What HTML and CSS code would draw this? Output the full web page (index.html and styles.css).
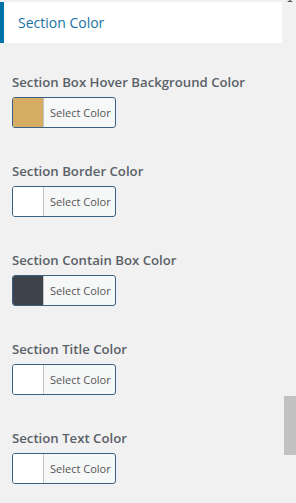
FILE: index.html
```html
<!DOCTYPE html>
<html>
<head>
<meta charset="utf-8">
<link rel="stylesheet" href="styles.css">
</head>
<body>
<div class="page">
  <div class="panel">
    <div class="section-head">Section Color</div>
    <div class="controls">
      <div class="control">
        <div class="label">Section Box Hover Background Color</div>
        <button class="color-btn"><span class="swatch swatch-gold"></span><span class="btn-text">Select Color</span></button>
      </div>
      <div class="control">
        <div class="label">Section Border Color</div>
        <button class="color-btn"><span class="swatch"></span><span class="btn-text">Select Color</span></button>
      </div>
      <div class="control">
        <div class="label">Section Contain Box Color</div>
        <button class="color-btn"><span class="swatch swatch-dark"></span><span class="btn-text">Select Color</span></button>
      </div>
      <div class="control">
        <div class="label">Section Title Color</div>
        <button class="color-btn"><span class="swatch"></span><span class="btn-text">Select Color</span></button>
      </div>
      <div class="control">
        <div class="label">Section Text Color</div>
        <button class="color-btn"><span class="swatch"></span><span class="btn-text">Select Color</span></button>
      </div>
    </div>
  </div>
  <div class="scroll-arrow"></div>
  <div class="scroll-thumb"></div>
</div>
</body>
</html>
```

FILE: styles.css
```css
html, body {
  margin: 0;
  padding: 0;
  background: #f1f1f1;
  height: 100%;
  overflow: hidden;
}
.page {
  position: relative;
  width: 296px;
  height: 503px;
  font-family: "Open Sans", "Noto Sans", sans-serif;
}
.panel {
  width: 282px;
  padding-top: 2px;
}
.section-head {
  height: 41px;
  box-sizing: border-box;
  background: #fff;
  border-left: 4px solid #0073aa;
  padding-left: 14px;
  display: flex;
  align-items: center;
  font-size: 14px;
  font-weight: 500;
  color: #1a71a0;
}
.controls {
  padding: 30px 0 0 12px;
}
.control {
  margin-bottom: 34px;
}
.label {
  font-size: 13.2px;
  line-height: 18px;
  font-weight: 600;
  color: #5a6168;
  margin-bottom: 6px;
  white-space: nowrap;
}
.color-btn {
  display: flex;
  height: 31px;
  width: 104px;
  box-sizing: border-box;
  padding: 0;
  border: 1px solid #3a6080;
  border-radius: 3px;
  overflow: hidden;
  background: #f6f7f7;
  font-family: inherit;
  cursor: pointer;
}
.swatch {
  width: 30px;
  height: 100%;
  background: #fff;
  border-right: 1px solid #c3c4c7;
  flex: none;
}
.swatch-gold { background: #d5ac62; }
.swatch-dark { background: #3c434a; }
.btn-text {
  flex: 1;
  display: flex;
  align-items: center;
  padding-left: 6px;
  font-size: 11px;
  color: #555;
  white-space: nowrap;
}
.scroll-arrow {
  position: absolute;
  top: 0;
  left: 287px;
  width: 0;
  height: 0;
  border-left: 3px solid transparent;
  border-right: 3px solid transparent;
  border-bottom: 2px solid #505050;
}
.scroll-thumb {
  position: absolute;
  left: 284px;
  top: 396px;
  width: 12px;
  height: 59px;
  background: #c1c1c1;
}
```
